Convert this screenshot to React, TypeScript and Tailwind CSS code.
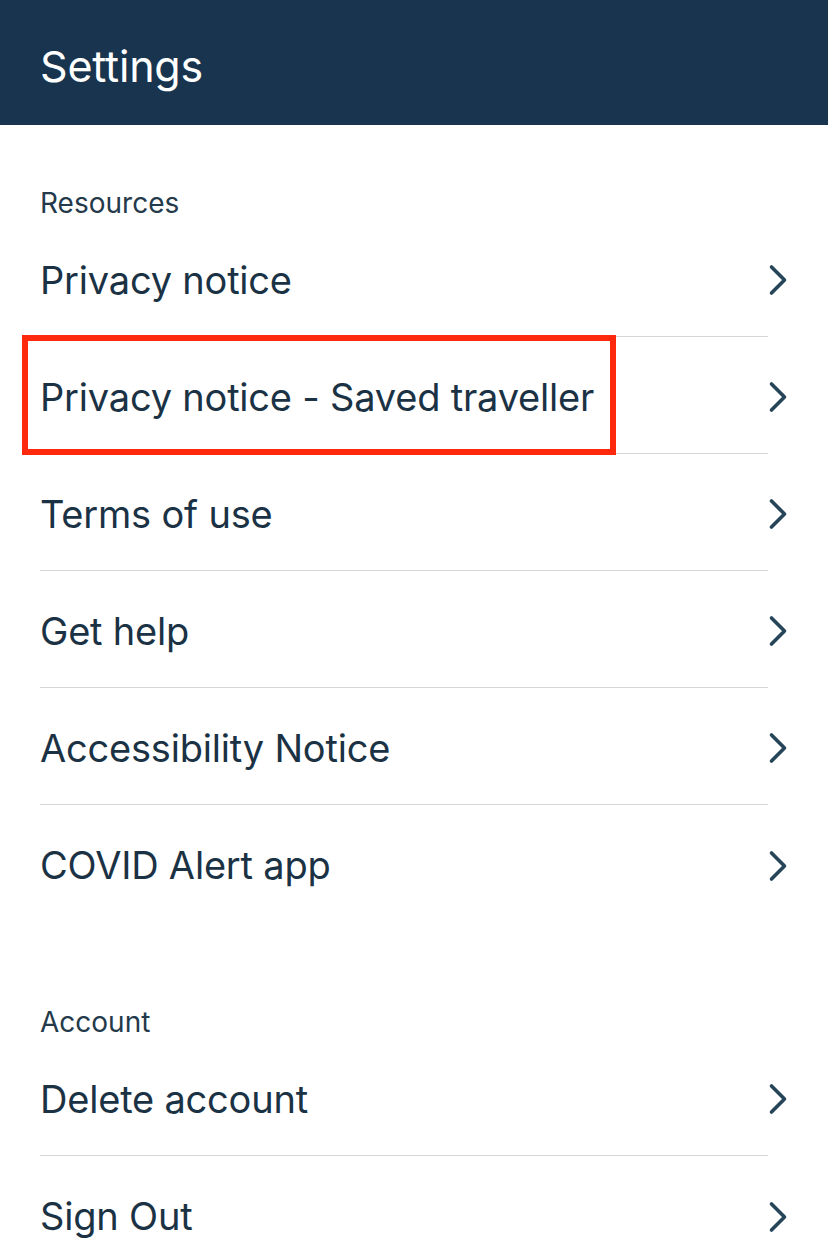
import React from 'react';

const resources = [
  'Privacy notice',
  'Privacy notice - Saved traveller',
  'Terms of use',
  'Get help',
  'Accessibility Notice',
  'COVID Alert app',
];

const account = ['Delete account', 'Sign Out'];

const Chevron = () => (
  <svg width="20" height="32" viewBox="0 0 20 32" fill="none" className="shrink-0 -mr-[20px]">
    <path d="M3.5 3l13 13-13 13" stroke="#264559" strokeWidth="3.6" strokeLinecap="round" strokeLinejoin="round" />
  </svg>
);

const Row = ({ label, last, highlight }: { label: string; last?: boolean; highlight?: boolean }) => (
  <div className="relative pl-10 pr-[60px]">
    <div className={`flex items-center h-[117px] pt-[4px] ${last ? '' : 'border-b border-[#d6d6d6]'}`}>
      <span className="flex-1 text-[38px] text-[#1b3245] tracking-[-0.2px]">{label}</span>
      <Chevron />
    </div>
    {highlight && (
      <div className="absolute left-[22px] top-[-2px] w-[594px] h-[120px] border-[6px] border-[#ff2a0d]" />
    )}
  </div>
);

const App = () => {
  return (
    <div className="w-[828px] min-h-[1258px] bg-white overflow-hidden" style={{ fontFamily: 'Inter, "Noto Sans", sans-serif' }}>
      <div className="h-[125px] bg-[#18344e] flex items-center pl-10 pt-[8px]">
        <h1 className="text-[43px] text-white tracking-[-0.2px]">Settings</h1>
      </div>
      <div className="pl-10 pt-[63px] pb-[2px] text-[28px] leading-[30px] text-[#243a4b]">Resources</div>
      {resources.map((r, i) => (
        <Row key={r} label={r} last={i === resources.length - 1} highlight={i === 1} />
      ))}
      <div className="pl-10 pt-[85px] pb-[2px] text-[28px] leading-[30px] text-[#243a4b]">Account</div>
      {account.map((r, i) => (
        <Row key={r} label={r} last={i === account.length - 1} />
      ))}
    </div>
  );
};

export default App;
